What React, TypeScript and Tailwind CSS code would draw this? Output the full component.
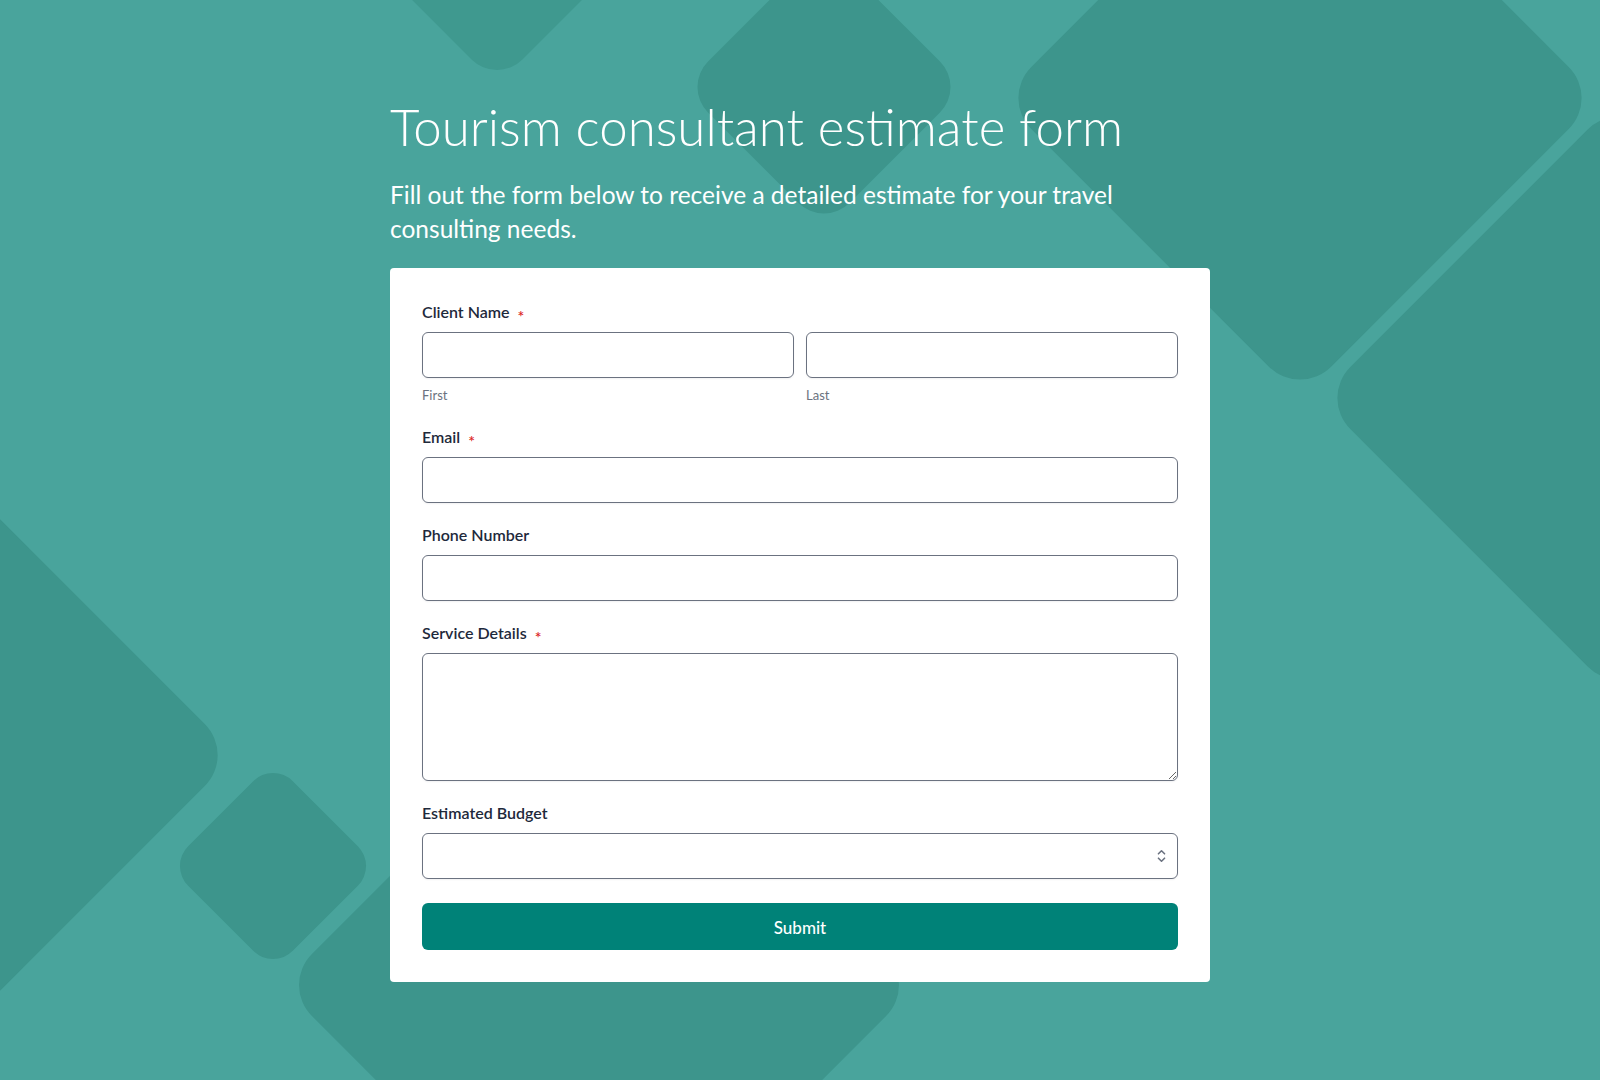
import React from "react";

function Field({
  label,
  required,
  children,
}: {
  label: string;
  required?: boolean;
  children: React.ReactNode;
}) {
  return (
    <div>
      <label className="flex items-center text-[16px] leading-6 font-semibold text-[#1e293b]">
        {label}
        {required && (
          <span className="ml-2 translate-y-[4px] text-[16px] text-[#dc2626]">*</span>
        )}
      </label>
      <div className="mt-2">{children}</div>
    </div>
  );
}

const inputCls =
  "block h-[46px] w-full rounded-md border border-[#6b7280] bg-white px-3 text-[16px] text-[#1e293b] shadow-[0_1px_2px_rgba(16,24,40,0.06)] outline-none";

export default function App() {
  return (
    <div
      className="relative min-h-[1080px] w-full overflow-hidden bg-[#49a49c]"
      style={{ fontFamily: "Lato, 'Noto Sans', sans-serif" }}
    >
      {/* background diamonds */}
      <div className="pointer-events-none absolute inset-0">
        <div className="absolute left-[391px] top-[-171px] h-[212px] w-[212px] rotate-45 rounded-[36px] bg-[#3f998f]" />
        <div className="absolute left-[724px] top-[-13px] h-[200px] w-[200px] rotate-45 rounded-[36px] bg-[#3d958c]" />
        <div className="absolute left-[1088px] top-[-114px] h-[424px] w-[424px] rotate-45 rounded-[44px] bg-[#3d958c]" />
        <div className="absolute left-[1407px] top-[186px] h-[424px] w-[424px] rotate-45 rounded-[44px] bg-[#3d958c]" />
        <div className="absolute left-[-218px] top-[567px] h-[376px] w-[376px] rotate-45 rounded-[44px] bg-[#3d958c]" />
        <div className="absolute left-[199px] top-[792px] h-[148px] w-[148px] rotate-45 rounded-[28px] bg-[#3d958c]" />
        <div className="absolute left-[374px] top-[760px] h-[450px] w-[450px] rotate-45 rounded-[44px] bg-[#3d958c]" />
      </div>

      <main className="relative mx-auto w-[820px] pt-[96px] pb-24">
        <h1 className="text-[51px] leading-[1.2] font-light text-white">
          Tourism consultant estimate form
        </h1>
        <p className="mt-[21px] text-[24.5px] leading-[34px] font-normal text-white">
          Fill out the form below to receive a detailed estimate for your travel consulting needs.
        </p>

        <form className="mt-[22px] rounded bg-white p-8" onSubmit={(e) => e.preventDefault()}>
          <div>
            <label className="flex items-center text-[16px] leading-6 font-semibold text-[#1e293b]">
              Client Name
              <span className="ml-2 translate-y-[4px] text-[16px] text-[#dc2626]">*</span>
            </label>
            <div className="mt-2 grid grid-cols-2 gap-3">
              <div>
                <input type="text" className={inputCls} />
                <p className="mt-[7px] text-[13px] leading-5 text-[#6b7280]">First</p>
              </div>
              <div>
                <input type="text" className={inputCls} />
                <p className="mt-[7px] text-[13px] leading-5 text-[#6b7280]">Last</p>
              </div>
            </div>
          </div>

          <div className="mt-5 space-y-5">
            <Field label="Email" required>
              <input type="email" className={inputCls} />
            </Field>
            <Field label="Phone Number">
              <input type="tel" className={inputCls} />
            </Field>
            <Field label="Service Details" required>
              <textarea className="block h-[128px] w-full rounded-md border border-[#6b7280] bg-white px-3 py-2 text-[16px] shadow-[0_1px_2px_rgba(16,24,40,0.06)] outline-none" />
            </Field>
            <Field label="Estimated Budget">
              <div className="relative">
                <select className={inputCls + " appearance-none pr-10"} defaultValue="">
                  <option value=""></option>
                  <option>Under $1,000</option>
                  <option>$1,000 - $5,000</option>
                  <option>$5,000 - $10,000</option>
                  <option>Over $10,000</option>
                </select>
                <svg
                  className="pointer-events-none absolute right-3 top-1/2 -translate-y-1/2"
                  width="9"
                  height="14"
                  viewBox="0 0 10 16"
                  fill="none"
                  stroke="#6b7280"
                  strokeWidth="1.8"
                  strokeLinecap="round"
                  strokeLinejoin="round"
                >
                  <path d="M1.5 5.5 L5 2 L8.5 5.5" />
                  <path d="M1.5 10.5 L5 14 L8.5 10.5" />
                </svg>
              </div>
            </Field>
          </div>

          <button
            type="submit"
            className="mt-6 flex h-[47px] w-full items-center justify-center rounded-md bg-[#008278] pt-[3px] text-[17px] font-medium text-white"
          >
            Submit
          </button>
        </form>
      </main>
    </div>
  );
}
